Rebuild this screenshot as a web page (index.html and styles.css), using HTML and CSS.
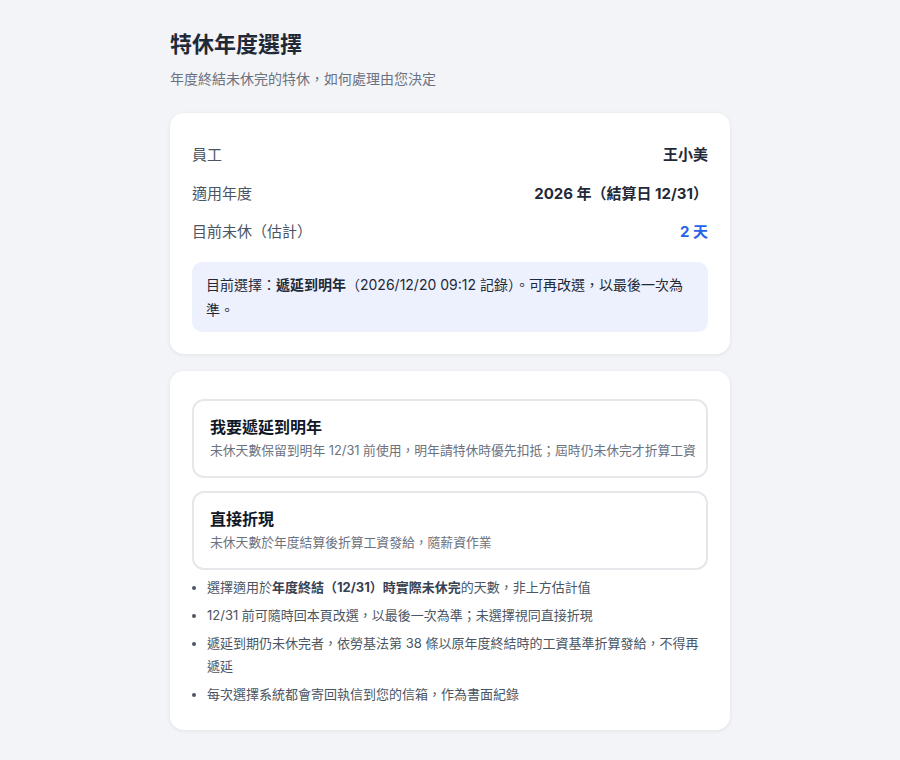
FILE: index.html
```html
<!DOCTYPE html>
<html lang="zh-Hant">
<head>
    <meta charset="UTF-8">
    <meta name="viewport" content="width=device-width, initial-scale=1.0">
    <title>特休年度選擇</title>
    <link rel="stylesheet" href="styles.css">
</head>
<body>
    <div class="page">
        <h1 class="title">特休年度選擇</h1>
        <p class="subtitle">年度終結未休完的特休，如何處理由您決定</p>

        <section class="card">
            <div class="row">
                <span class="label">員工</span>
                <span class="value">王小美</span>
            </div>
            <div class="row">
                <span class="label">適用年度</span>
                <span class="value">2026 年（結算日 12/31）</span>
            </div>
            <div class="row">
                <span class="label">目前未休（估計）</span>
                <span class="value value-blue">2 天</span>
            </div>
            <div class="notice">
                目前選擇：<strong>遞延到明年</strong>（2026/12/20 09:12 記錄）。可再改選，以最後一次為準。
            </div>
        </section>

        <section class="card card-options">
            <button type="button" class="option">
                <span class="option-title">我要遞延到明年</span>
                <span class="option-desc">未休天數保留到明年 12/31 前使用，明年請特休時優先扣抵；屆時仍未休完才折算工資</span>
            </button>
            <button type="button" class="option">
                <span class="option-title">直接折現</span>
                <span class="option-desc">未休天數於年度結算後折算工資發給，隨薪資作業</span>
            </button>
            <ul class="rules">
                <li>選擇適用於<strong>年度終結（12/31）時實際未休完</strong>的天數，非上方估計值</li>
                <li>12/31 前可隨時回本頁改選，以最後一次為準；未選擇視同直接折現</li>
                <li>遞延到期仍未休完者，依勞基法第 38 條以原年度終結時的工資基準折算發給，不得再遞延</li>
                <li>每次選擇系統都會寄回執信到您的信箱，作為書面紀錄</li>
            </ul>
        </section>
    </div>
</body>
</html>
```

FILE: styles.css
```css
body {
    font-family: Inter, "Noto Sans CJK TC", sans-serif;
    background: #f3f4f8;
    color: #1f2937;
    margin: 0;
}
.page {
    max-width: 560px;
    margin: 0 auto;
    padding: 29px 0 30px;
}
.title {
    font-size: 22px;
    line-height: 30px;
    font-weight: 700;
    margin: 0 0 10px;
    color: #1f2937;
}
.subtitle {
    font-size: 14px;
    line-height: 20px;
    color: #6b7280;
    margin: 0 0 24px;
}
.card {
    background: #fff;
    border-radius: 14px;
    box-shadow: 0 1px 4px rgba(15, 23, 42, 0.08);
    padding: 23px 22px 22px;
    margin-bottom: 17px;
}
.row {
    display: flex;
    justify-content: space-between;
    align-items: center;
    padding: 9px 0;
    line-height: 20.5px;
    font-size: 15px;
}
.label {
    color: #4b5563;
}
.value {
    font-weight: 700;
    color: #1f2937;
}
.value-blue {
    color: #2563eb;
}
.notice {
    margin-top: 10px;
    background: #edf1fd;
    border-radius: 10px;
    padding: 10px 14px;
    font-size: 14px;
    line-height: 25px;
    color: #1f2937;
}
.card-options {
    padding: 28px 22px 24px;
}
.option {
    display: block;
    width: 100%;
    text-align: left;
    font-family: inherit;
    background: #fff;
    border: 2px solid #e5e7eb;
    border-radius: 12px;
    padding: 14px 8px 15px 16px;
    margin-bottom: 13px;
    cursor: pointer;
}
.option:last-of-type {
    margin-bottom: 6px;
}
.option-title {
    display: block;
    font-size: 16px;
    line-height: 24px;
    font-weight: 700;
    color: #111827;
}
.option-desc {
    display: block;
    margin-top: 2px;
    font-size: 12.8px;
    line-height: 20px;
    color: #6b7280;
    white-space: nowrap;
}
.rules {
    margin: 0;
    padding-left: 15px;
    font-size: 13px;
    line-height: 23px;
    color: #4b5563;
}
.rules li {
    margin-bottom: 5px;
}
.rules li:last-child {
    margin-bottom: 0;
}
.rules strong {
    color: #374151;
}
```
